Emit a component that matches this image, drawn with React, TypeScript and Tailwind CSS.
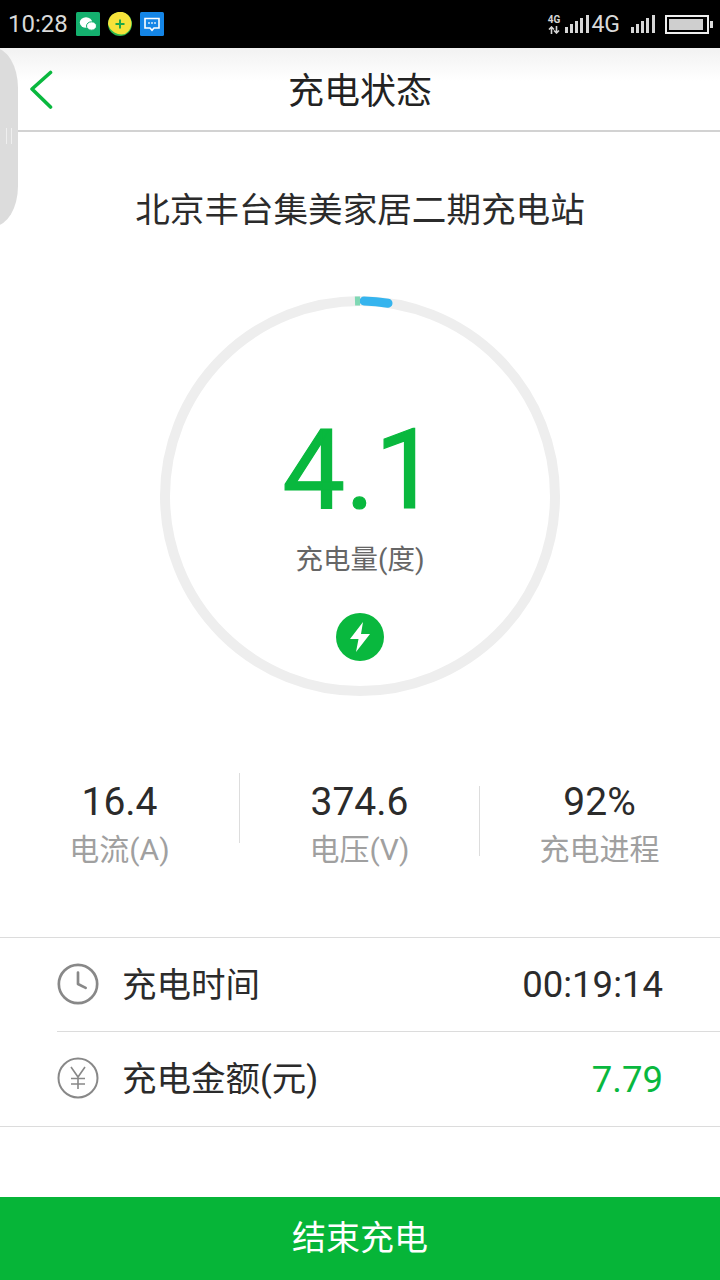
import { Clock } from "lucide-react";

const FONT = "font-['Roboto','Noto_Sans_CJK_SC',sans-serif]";

function WechatIcon() {
  return (
    <svg width="24" height="24" viewBox="0 0 24 24">
      <rect width="24" height="24" rx="1.5" fill="#14b06e" />
      <ellipse cx="10" cy="10.5" rx="6.2" ry="5.2" fill="#fff" />
      <ellipse cx="15.5" cy="14" rx="5" ry="4.2" fill="#fff" stroke="#14b06e" strokeWidth="1" />
    </svg>
  );
}

function PlusBadge() {
  return (
    <svg width="24" height="24" viewBox="0 0 24 24">
      <circle cx="12" cy="12" r="12" fill="#2db84f" />
      <path d="M0 12a12 12 0 0 1 20-9a12 12 0 0 1 -3 19a14 14 0 0 1 -17 -10z" fill="#f6e23a" />
      <path d="M12 7.5v9M7.5 12h9" stroke="#1fa64a" strokeWidth="2" />
    </svg>
  );
}

function MessageIcon() {
  return (
    <svg width="24" height="24" viewBox="0 0 24 24">
      <rect width="24" height="24" rx="1.5" fill="#1485e6" />
      <path d="M5 6.5h14v9.5h-5l-2 2.2-2-2.2H5z" fill="none" stroke="#fff" strokeWidth="1.6" />
      <path d="M8.2 11h1.6M11.2 11h1.6M14.2 11h1.6" stroke="#fff" strokeWidth="1.6" />
    </svg>
  );
}

function SignalBars() {
  return (
    <svg width="24" height="20" viewBox="0 0 24 20" fill="#d6d6d6">
      <rect x="0" y="13" width="3" height="6" />
      <rect x="5" y="10" width="3" height="9" />
      <rect x="10" y="7" width="3" height="12" />
      <rect x="15" y="4" width="3" height="15" />
      <rect x="21" y="1" width="3" height="18" />
    </svg>
  );
}

function StatusBar() {
  return (
    <div className="flex h-12 shrink-0 items-center justify-between bg-black pl-2 pr-[7px]">
      <div className="flex items-center">
        <span className="text-[24px] leading-none text-[#d9d9d9]">10:28</span>
        <div className="ml-2 flex items-center gap-2">
          <WechatIcon />
          <PlusBadge />
          <MessageIcon />
        </div>
      </div>
      <div className="flex items-center">
        <div className="mr-[5px] flex flex-col items-center text-[#d6d6d6]">
          <span className="text-[10px] font-bold leading-[12px]">4G</span>
          <svg width="12" height="8" viewBox="0 0 12 8" fill="none" stroke="#d6d6d6" strokeWidth="1.6">
            <path d="M3.5 8V1M1 3.5 3.5 1 6 3.5M8.5 0v7M6 4.5 8.5 7 11 4.5" />
          </svg>
        </div>
        <SignalBars />
        <span className="ml-[2px] text-[23px] leading-none text-[#d9d9d9]">4G</span>
        <div className="ml-[11px]">
          <SignalBars />
        </div>
        <div className="ml-[10px] flex items-center">
          <div className="h-[19px] w-[44px] border-2 border-[#eeeeee] p-[2px]">
            <div className="h-full w-[34px] bg-[#cfcfcf]" />
          </div>
          <div className="ml-[1px] h-[7px] w-[3px] bg-[#dddddd]" />
        </div>
      </div>
    </div>
  );
}

function Header() {
  return (
    <div className="relative flex h-[84px] shrink-0 items-center justify-center border-b-2 border-[#d2d2d2] bg-gradient-to-b from-[#f2f2f2] to-[#ffffff] to-40% pt-[5px]">
      <svg className="absolute left-[28px] top-[22px]" width="26" height="40" viewBox="0 0 26 40" fill="none">
        <path d="M22.5 2.5 4 19l18.5 18" stroke="#09b83e" strokeWidth="3.6" strokeLinecap="round" strokeLinejoin="round" />
      </svg>
      <span className="text-[36px] leading-none text-[#222222]">充电状态</span>
    </div>
  );
}

function Gauge() {
  return (
    <div className="relative mx-auto mt-[64px] flex h-[400px] w-[400px] flex-col items-center rounded-full border-[10px] border-[#eeeeee]">
      <svg className="absolute left-[-10px] top-[-10px]" width="400" height="400" viewBox="0 0 400 400" fill="none">
        <path d="M204 5A195 195 0 0 1 228 7.2" stroke="#35b4ee" strokeWidth="9" strokeLinecap="round" />
        <path d="M195 5.1A195 195 0 0 1 200 5" stroke="#7fd8b4" strokeWidth="9" />
      </svg>
      <span className="mt-[108px] text-[112px] leading-[112px] text-[#09b83e] [-webkit-text-stroke:1.2px_#09b83e]">4.1</span>
      <span className="mt-[16px] text-[27.5px] leading-[36px] text-[#666666]">充电量(度)</span>
      <div className="mt-[35px] flex h-12 w-12 items-center justify-center rounded-full bg-[#09b83e]">
        <svg width="26" height="32" viewBox="0 0 26 32" fill="#fff">
          <path d="M16 1 3 18h8.5L9 31l14-18h-9z" />
        </svg>
      </div>
    </div>
  );
}

function Stat({ value, label }: { value: string; label: string }) {
  return (
    <div className="flex w-[239px] flex-col items-center pt-[7px]">
      <span className="text-[39px] leading-[44px] text-[#2b2b2b]">{value}</span>
      <span className="mt-[4px] text-[30px] leading-[44px] text-[#a0a0a0]">{label}</span>
    </div>
  );
}

function Stats() {
  return (
    <div className="mt-[77px] flex h-[100px] items-start">
      <Stat value="16.4" label="电流(A)" />
      <div className="h-[70px] w-px bg-[#dddddd]" />
      <Stat value="374.6" label="电压(V)" />
      <div className="mt-[13px] h-[70px] w-px bg-[#dddddd]" />
      <Stat value="92%" label="充电进程" />
    </div>
  );
}

function InfoRows() {
  return (
    <div className="mt-[64px] border-y border-[#dcdcdc]">
      <div className="ml-[57px] flex h-[94px] items-center border-b border-[#dcdcdc] pr-[57px]">
        <Clock size={46} strokeWidth={1.4} color="#888888" className="-ml-[2px] -mt-[2px]" />
        <span className="ml-[21px] flex-1 pt-[2px] text-[34.5px] text-[#2b2b2b]">充电时间</span>
        <span className="pt-[2px] text-[36.5px] text-[#2b2b2b]">00:19:14</span>
      </div>
      <div className="ml-[57px] flex h-[94px] items-center pr-[57px]">
        <svg className="-mt-[2px]" width="42" height="42" viewBox="0 0 42 42" fill="none" stroke="#888888" strokeWidth="2">
          <circle cx="21" cy="21" r="19.5" />
          <path d="M14 10l7 10 7-10M21 20v12M14 21.5h14M14 27h14" strokeWidth="1.6" />
        </svg>
        <span className="ml-[23px] flex-1 pt-[2px] text-[34.5px] text-[#2b2b2b]">充电金额(元)</span>
        <span className="pt-[2px] text-[36.5px] text-[#09b83e]">7.79</span>
      </div>
    </div>
  );
}

export default function App() {
  return (
    <div className={`relative flex h-[1280px] w-[720px] flex-col overflow-hidden bg-white ${FONT}`}>
      <StatusBar />
      <Header />
      <h1 className="mt-[56px] text-center text-[34.6px] font-normal leading-[44px] text-[#2b2b2b]">北京丰台集美家居二期充电站</h1>
      <Gauge />
      <Stats />
      <InfoRows />
      <button className="mt-auto h-[83px] w-full bg-[#06b538] text-[34px] text-white">结束充电</button>

      {/* floating handle stuck on the left edge */}
      <div className="absolute left-[-30px] top-[48px] flex h-[178px] w-[48px] items-center justify-end rounded-r-[24px_40px] bg-[#dcdcdc] pr-[6px]">
        <div className="mt-[-2px] h-[16px] w-[6px] border-x border-[#efefef]" />
      </div>
    </div>
  );
}
